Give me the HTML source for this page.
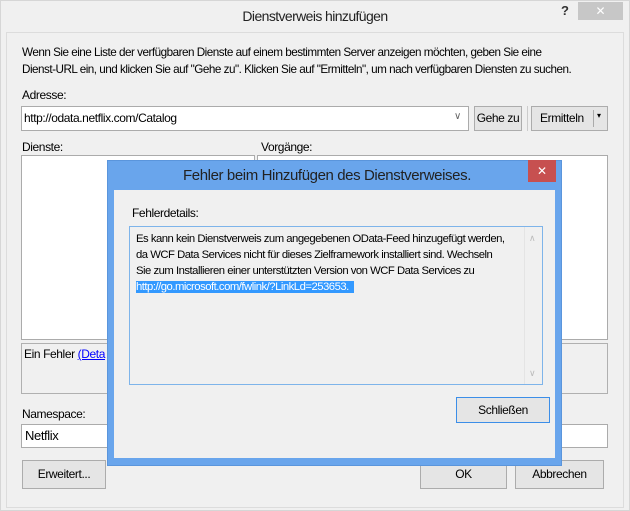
<!DOCTYPE html>
<html><head><meta charset="utf-8"><style>
*{margin:0;padding:0;box-sizing:border-box}
body{width:630px;height:511px;background:#f0f0f0;font-family:"Liberation Sans",sans-serif;font-size:12px;color:#000;position:relative;overflow:hidden}
.a{position:absolute}
.t{position:absolute;white-space:nowrap;letter-spacing:-0.4px}
.box{position:absolute;background:#fff;border:1px solid #ababab}
.btn{position:absolute;background:#e5e5e5;border:1px solid #acacac;text-align:center;letter-spacing:-0.4px}
</style></head><body>
<div class="a" style="left:0;top:0;width:630px;height:511px;border:1px solid #d6d6d6"></div>
<div class="t" style="left:0;width:630px;text-align:center;top:8px;font-size:14px;color:#222;letter-spacing:-0.6px">Dienstverweis hinzufügen</div>
<div class="t" style="left:561px;top:3px;font-size:13px;font-weight:bold;color:#333">?</div>
<div class="a" style="left:578px;top:2px;width:45px;height:18px;background:#c7c7c7;color:#fff;text-align:center;font-size:12px;line-height:18px">✕</div>
<div class="a" style="left:6px;top:32px;width:618px;height:476px;border:1px solid #dcdcdc"></div>
<div class="t" style="left:22px;top:46px;font-size:11.7px;letter-spacing:-0.5px">Wenn Sie eine Liste der verfügbaren Dienste auf einem bestimmten Server anzeigen möchten, geben Sie eine</div>
<div class="t" style="left:22px;top:63px;font-size:11.7px;letter-spacing:-0.5px">Dienst-URL ein, und klicken Sie auf "Gehe zu". Klicken Sie auf "Ermitteln", um nach verfügbaren Diensten zu suchen.</div>
<div class="t" style="left:22px;top:88px">Adresse:</div>
<div class="box" style="left:21px;top:106px;width:448px;height:25px"></div>
<div class="t" style="left:24px;top:111px">http://odata.netflix.com/Catalog</div>
<div class="t" style="left:454px;top:111px;font-size:10px;color:#666">∨</div>
<div class="btn" style="left:474px;top:106px;width:48px;height:25px;line-height:23px">Gehe zu</div>
<div class="a" style="left:527px;top:106px;width:1px;height:25px;background:#ccc"></div>
<div class="btn" style="left:531px;top:106px;width:77px;height:25px;line-height:23px;text-align:left;padding-left:8px">Ermitteln</div>
<div class="a" style="left:593px;top:110px;width:1px;height:17px;background:#aaa"></div>
<div class="t" style="left:597px;top:111px;font-size:8px">▾</div>
<div class="t" style="left:22px;top:140px">Dienste:</div>
<div class="t" style="left:261px;top:140px">Vorgänge:</div>
<div class="box" style="left:21px;top:155px;width:234px;height:185px"></div>
<div class="box" style="left:257px;top:155px;width:351px;height:185px"></div>
<div class="a" style="left:21px;top:343px;width:587px;height:51px;border:1px solid #b0b0b0"></div>
<div class="t" style="left:24px;top:347px">Ein Fehler <span style="color:#00f;text-decoration:underline">(Deta</span></div>
<div class="t" style="left:22px;top:407px">Namespace:</div>
<div class="box" style="left:21px;top:424px;width:587px;height:24px"></div>
<div class="t" style="left:25px;top:428px;font-size:13px">Netflix</div>
<div class="btn" style="left:22px;top:460px;width:84px;height:29px;line-height:27px">Erweitert...</div>
<div class="btn" style="left:420px;top:460px;width:87px;height:29px;line-height:27px">OK</div>
<div class="btn" style="left:515px;top:460px;width:89px;height:29px;line-height:27px">Abbrechen</div>

<div class="a" style="left:107px;top:160px;width:455px;height:306px;background:#69a5ec;border:1px solid #5a95dc"></div>
<div class="t" style="left:107px;width:440px;text-align:center;top:167px;font-size:15px;color:#222">Fehler beim Hinzufügen des Dienstverweises.</div>
<div class="a" style="left:528px;top:160px;width:28px;height:22px;background:#c75050;color:#fff;text-align:center;font-size:12px;line-height:22px">✕</div>
<div class="a" style="left:114px;top:190px;width:441px;height:268px;background:#f0f0f0"></div>
<div class="t" style="left:132px;top:206px">Fehlerdetails:</div>
<div class="a" style="left:129px;top:226px;width:414px;height:159px;border:1px solid #7eb4ea;background:#f0f0f0"></div>
<div class="a" style="left:524px;top:227px;width:1px;height:157px;background:#e4e4e4"></div>
<div class="t" style="left:529px;top:233px;font-size:9px;color:#bbb">∧</div>
<div class="t" style="left:529px;top:368px;font-size:9px;color:#bbb">∨</div>
<div class="t" style="left:136px;top:231px;line-height:16px;font-size:11.3px;letter-spacing:-0.5px">Es kann kein Dienstverweis zum angegebenen OData-Feed hinzugefügt werden,<br>da WCF Data Services nicht für dieses Zielframework installiert sind. Wechseln<br>Sie zum Installieren einer unterstützten Version von WCF Data Services zu<br><span style="background:#3399ff;color:#fff;padding-right:5px">http://go.microsoft.com/fwlink/?LinkLd=253653.</span></div>
<div class="btn" style="left:456px;top:397px;width:94px;height:26px;line-height:24px;border-color:#3c8ee8">Schließen</div>
</body></html>
